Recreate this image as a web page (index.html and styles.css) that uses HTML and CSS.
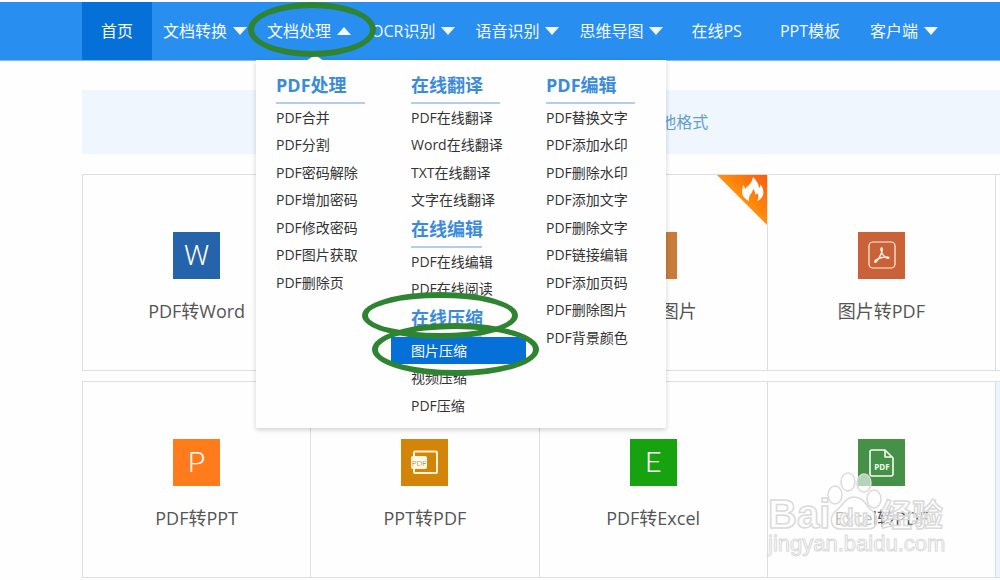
FILE: index.html
```
<!DOCTYPE html>
<html lang="zh-CN">
<head>
<meta charset="utf-8">
<meta name="viewport" content="width=device-width, initial-scale=1">
<title>PDF在线转换</title>
<link rel="stylesheet" href="styles.css">
</head>
<body>

<header class="header">
  <nav>
    <ul class="nav">
      <li class="plain active"><a href="#">首页</a></li>
      <li><a href="#">文档转换<i class="caret"></i></a></li>
      <li class="open">
        <a href="#">文档处理<i class="caret up"></i></a>
        <div class="menu">
          <div class="menu-col">
            <h3 class="wide">PDF处理</h3>
            <ul>
              <li><a href="#">PDF合并</a></li>
              <li><a href="#">PDF分割</a></li>
              <li><a href="#">PDF密码解除</a></li>
              <li><a href="#">PDF增加密码</a></li>
              <li><a href="#">PDF修改密码</a></li>
              <li><a href="#">PDF图片获取</a></li>
              <li><a href="#">PDF删除页</a></li>
            </ul>
          </div>
          <div class="menu-col">
            <h3 class="wide">在线翻译</h3>
            <ul>
              <li><a href="#">PDF在线翻译</a></li>
              <li><a href="#">Word在线翻译</a></li>
              <li><a href="#">TXT在线翻译</a></li>
              <li><a href="#">文字在线翻译</a></li>
            </ul>
            <h3>在线编辑</h3>
            <ul>
              <li><a href="#">PDF在线编辑</a></li>
              <li><a href="#">PDF在线阅读</a></li>
            </ul>
            <h3>在线压缩<span class="ring ring-title"></span></h3>
            <ul>
              <li class="selected"><a href="#">图片压缩</a><span class="ring ring-item"></span></li>
              <li><a href="#">视频压缩</a></li>
              <li><a href="#">PDF压缩</a></li>
            </ul>
          </div>
          <div class="menu-col">
            <h3 class="wide">PDF编辑</h3>
            <ul>
              <li><a href="#">PDF替换文字</a></li>
              <li><a href="#">PDF添加水印</a></li>
              <li><a href="#">PDF删除水印</a></li>
              <li><a href="#">PDF添加文字</a></li>
              <li><a href="#">PDF删除文字</a></li>
              <li><a href="#">PDF链接编辑</a></li>
              <li><a href="#">PDF添加页码</a></li>
              <li><a href="#">PDF删除图片</a></li>
              <li><a href="#">PDF背景颜色</a></li>
            </ul>
          </div>
        </div>
        <span class="ring ring-nav"></span>
      </li>
      <li><a href="#">OCR识别<i class="caret"></i></a></li>
      <li><a href="#">语音识别<i class="caret"></i></a></li>
      <li><a href="#">思维导图<i class="caret"></i></a></li>
      <li class="plain"><a href="#">在线PS</a></li>
      <li class="plain"><a href="#">PPT模板</a></li>
      <li><a href="#">客户端<i class="caret"></i></a></li>
    </ul>
  </nav>
</header>

<main class="content">
  <div class="banner">他格式</div>

  <div class="cards">
    <a class="card" href="#">
      <span class="icon word">W</span>
      PDF转Word
    </a>
    <a class="card" href="#"></a>
    <a class="card" href="#">
      <svg class="hot" width="50" height="50" viewBox="0 0 50 50">
        <defs>
          <linearGradient id="hotFill" x1="0" y1="1" x2="1" y2="0">
            <stop offset="0.3" stop-color="#ffa60d"/>
            <stop offset="1" stop-color="#ff5a0a"/>
          </linearGradient>
        </defs>
        <path d="M0 0H50V50Z" fill="url(#hotFill)"/>
        <path fill="#fff" d="M36 2c3 3 6 7 6 11 1-1 2-2 1-4 3 3 4 7 3 11-1 3-3 5-6 6 2-3 2-6 0-8-1 2-2 2-2 0 0-2-1-3-2-4 0 4-5 6-4 12-4-2-7-5-7-9 0-3 1-5 1-7 1 1 2 2 2 4 3-3 7-6 8-12z"/>
      </svg>
      <span class="icon picture"></span>
      PDF转图片
    </a>
    <a class="card" href="#">
      <span class="icon acrobat">
        <svg width="47" height="47" viewBox="0 0 47 47" fill="none" stroke="#fff0e2">
          <rect x="11" y="10" width="26" height="26" rx="4" stroke-width="1.2"/>
          <path stroke-width="1.5" d="M23 17c0-2 2-1 1 2-1 4-3 8-6 11-1 1-2-1 0-2 3-2 7-3 11-3 3 0 2 2 0 1-3-1-6-5-6-9z"/>
        </svg>
      </span>
      图片转PDF
    </a>
    <a class="card" href="#"></a>

    <a class="card" href="#">
      <span class="icon ppt">P</span>
      PDF转PPT
    </a>
    <a class="card" href="#">
      <span class="icon slides">
        <svg width="47" height="47" viewBox="0 0 47 47">
          <rect x="13" y="12.5" width="23" height="21.5" rx="1" fill="none" stroke="#fff3d6" stroke-width="2"/>
          <rect x="10" y="17" width="16" height="13" rx="2" fill="#fff8e6"/>
          <text class="icon-label" x="18" y="27" font-size="8" fill="#8f5a00">PDF</text>
        </svg>
      </span>
      PPT转PDF
    </a>
    <a class="card" href="#">
      <span class="icon excel">E</span>
      PDF转Excel
    </a>
    <a class="card" href="#">
      <span class="icon sheet">
        <svg width="47" height="47" viewBox="0 0 47 47" fill="none" stroke="#f0fff0" stroke-width="1.6" stroke-linejoin="round">
          <path d="M14 11H27L35 19V35Q35 37 33 37H14Q12 37 12 35V13Q12 11 14 11ZM27 11V18H35"/>
          <text class="icon-label bold" x="24" y="31" font-size="8" fill="#f0fff0" stroke="none">PDF</text>
        </svg>
      </span>
      Excel转PDF
      <svg class="watermark" width="182" height="90" viewBox="0 0 182 90">
        <text x="0" y="56" font-size="40">Bai</text>
        <ellipse cx="67" cy="23" rx="7" ry="9"/>
        <ellipse cx="80" cy="10" rx="7" ry="9"/>
        <ellipse cx="96" cy="11" rx="7" ry="9"/>
        <ellipse cx="106" cy="27" rx="7" ry="9"/>
        <path d="M86 25C94 25 97 31 102 37C112 44 111 57 100 57H74C62 58 60 45 69 38C76 32 78 25 86 25Z"/>
        <text x="71" y="54" font-size="24">du</text>
        <text x="113" y="54" font-size="31">经验</text>
        <text class="site" x="0" y="79" font-size="22">jingyan.baidu.com</text>
      </svg>
    </a>
    <a class="card tinted" href="#"></a>
  </div>
</main>

</body>
</html>
```
FILE: styles.css
```
* {
  box-sizing: border-box;
}

body {
  margin: 0;
  background: #fefefe;
  color: #333;
  font-family: "Open Sans", "Noto Sans CJK SC", sans-serif;
  font-size: 14px;
}

ul {
  list-style: none;
  margin: 0;
  padding: 0;
}

a {
  color: inherit;
  text-decoration: none;
}

/* top bar */
.header {
  position: relative;
  z-index: 2;
  margin-top: 2px;
  padding-left: 82px;
  background: #288ef0;
  border-bottom: 1px solid #7fbcf5;
}

.nav {
  display: flex;
}

.nav > li {
  position: relative;
  flex: none;
}

.nav > li > a {
  display: flex;
  align-items: center;
  gap: 6px;
  padding: 0 9px 0 11px;
  color: #f4fbff;
  font-size: 16px;
  line-height: 58px;
}

.nav > .plain > a {
  padding: 0 19px;
}

.nav > .active {
  background: #0570d8;
}

.caret {
  border: 7px solid transparent;
  border-top: 8px solid #f4fbff;
  border-bottom: 0;
}

.caret.up {
  border-top: 0;
  border-bottom: 8px solid #f4fbff;
}

.open::after {
  content: "";
  position: absolute;
  bottom: -1px;
  left: 50px;
  border: 9px solid transparent;
  border-top: 0;
  border-bottom: 6px solid #fff;
}

/* dropdown */
.menu {
  position: absolute;
  top: 100%;
  left: 0;
  display: flex;
  padding: 10px 5px 9px 0;
  background: #fefefe;
  box-shadow: 0 2px 5px rgba(0, 0, 0, 0.18);
}

.menu-col {
  width: 135px;
}

.menu h3 {
  position: relative;
  width: 71px;
  margin: 0 0 0 20px;
  padding-bottom: 2px;
  border-bottom: 2px solid #b5cdec;
  color: #3c8bdb;
  font-size: 18px;
  line-height: 30px;
  white-space: nowrap;
}

.menu h3.wide {
  width: 89px;
}

.menu li {
  position: relative;
  padding-left: 20px;
  line-height: 27px;
}

.menu li:nth-child(even) {
  padding-bottom: 1px;
}

.menu .selected {
  background: #0570d8;
  color: #fff;
}

/* green highlight rings */
.ring {
  position: absolute;
  z-index: 1;
  border: 6px solid #2f8432;
  border-radius: 50%;
}

.ring-nav {
  top: 0;
  left: -8px;
  width: 128px;
  height: 55px;
}

.ring-title {
  top: -11px;
  left: -49px;
  width: 156px;
  height: 47px;
}

.ring-item {
  top: -14px;
  left: -19px;
  width: 167px;
  height: 53px;
}

/* page */
.content {
  padding-left: 82px;
}

.banner {
  margin-top: 29px;
  padding-left: 63%;
  background: #eff6fd;
  color: #64a0c8;
  font-size: 16px;
  line-height: 64px;
}

.cards {
  display: grid;
  grid-template-columns: repeat(4, 1fr) 5px;
  row-gap: 10px;
  margin-top: 20px;
}

.card {
  position: relative;
  display: flex;
  flex-direction: column;
  align-items: center;
  gap: 16px;
  min-height: 197px;
  padding-top: 57px;
  border: 1px solid #dcdfe2;
  border-right: 0;
  color: #555;
  font-size: 18px;
  line-height: 32px;
}

.card.tinted {
  background: #eaf5fd;
}

.icon {
  width: 47px;
  height: 47px;
  color: #fff;
  font-family: Roboto, sans-serif;
  font-size: 28px;
  font-weight: 300;
  line-height: 47px;
  text-align: center;
}

.icon svg {
  display: block;
}

.icon-label {
  font-family: "Open Sans", sans-serif;
  text-anchor: middle;
}

.icon-label.bold {
  font-weight: bold;
}

.word { background: #2564ab; }
.picture { background: #c77c3b; }
.acrobat { background: #c96238; }
.ppt { background: #ff7b1c; }
.slides { background: #d28508; }
.excel { background: #17a30f; }
.sheet { background: #469147; }

.hot {
  position: absolute;
  top: 0;
  right: 0;
}

.watermark {
  position: absolute;
  top: 90px;
  left: 0;
  overflow: visible;
  fill: rgba(255, 255, 255, 0.6);
  stroke: #dadada;
  stroke-width: 1.5px;
  font-family: "Liberation Sans", "Noto Sans CJK SC", sans-serif;
  font-weight: bold;
}

.watermark .site {
  stroke-width: 1px;
  font-weight: normal;
}
```
